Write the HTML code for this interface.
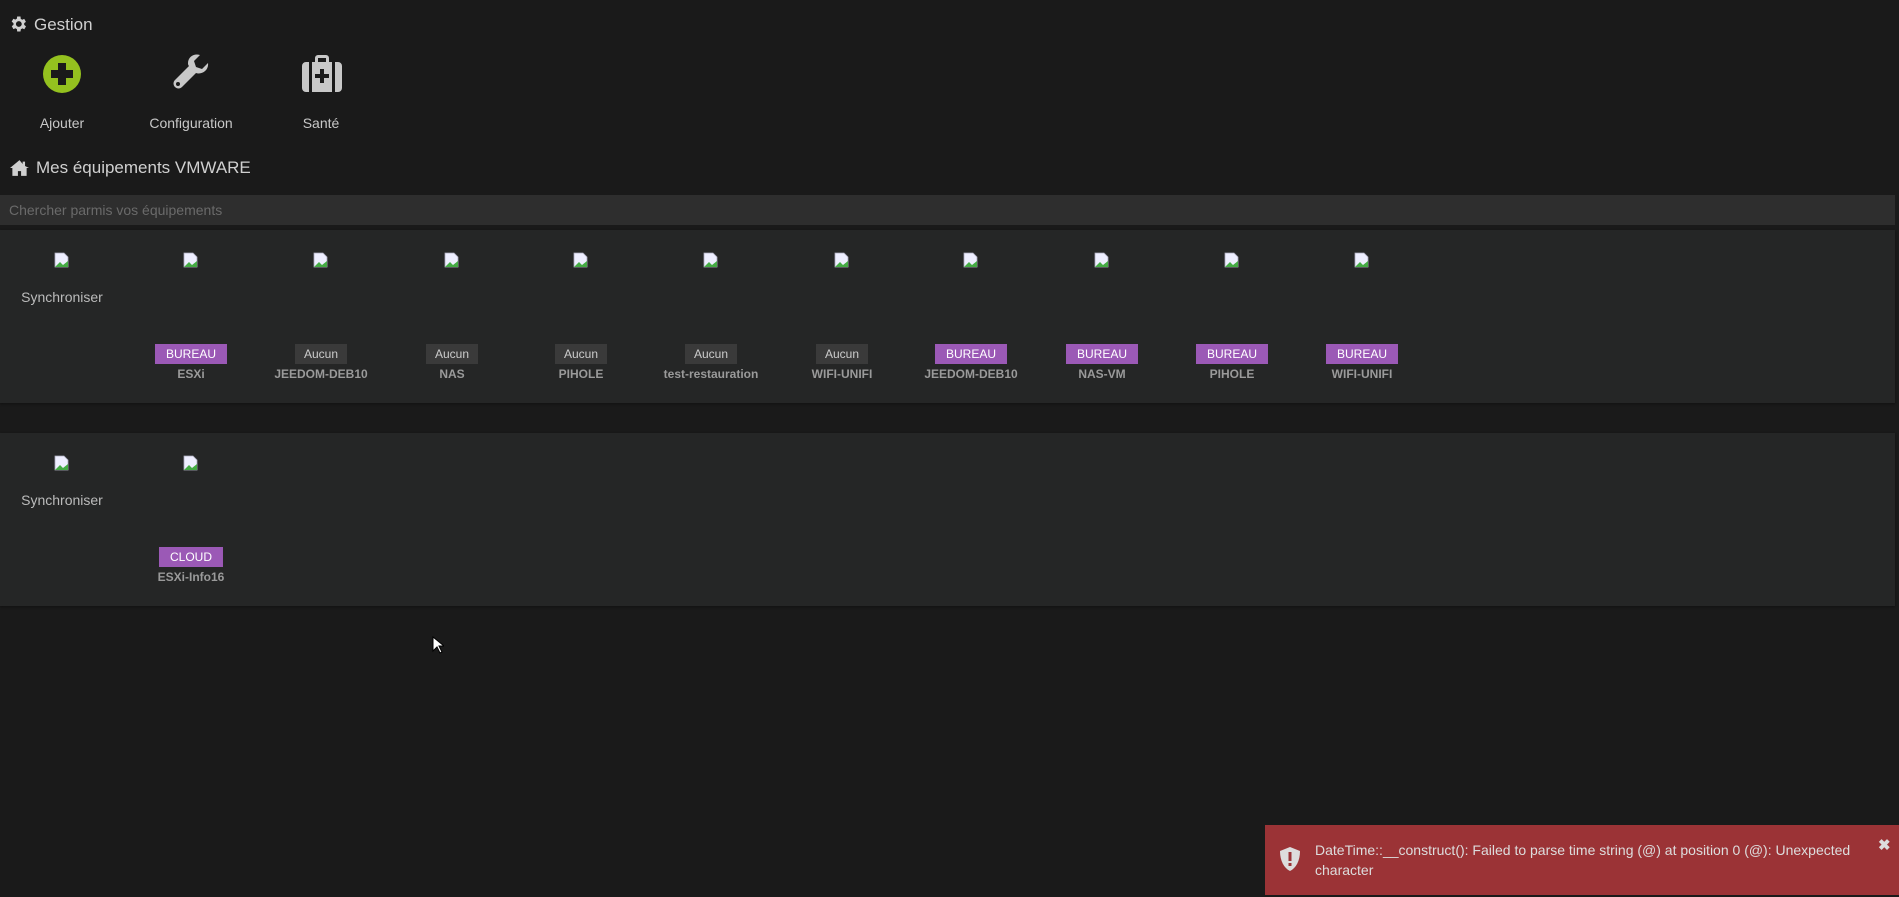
<!DOCTYPE html>
<html><head><meta charset="utf-8"><style>
*{margin:0;padding:0;box-sizing:border-box}
body{width:1899px;height:897px;background:#1a1a1a;font-family:"Liberation Sans",sans-serif;color:#ccc;position:relative;overflow:hidden}
.abs{position:absolute}
.h{font-size:17px;color:#d0d0d0}
.lbl{font-size:14px;color:#c8c8c8;text-align:center;width:130px}
.panel{position:absolute;left:0;width:1895px;height:173px;background:#252626;box-shadow:0 1px 2px #111}
.card{position:absolute;width:130px;text-align:center}
.img{position:absolute;left:57px;top:22px;width:16px;height:16px}
.badge{position:absolute;top:114px;height:20px;line-height:20px;font-size:12px;color:#fff;left:50%;transform:translateX(-50%);padding:0 11px}
.bu{background:#9b59b6}
.au{background:#3a3a3a;color:#ccc;padding:0 9px}
.nm{position:absolute;top:137px;width:130px;font-size:12px;font-weight:bold;color:#9a9a9a}
.sync{position:absolute;top:59px;width:130px;font-size:14px;color:#bbb}
</style></head><body>
<svg class="abs" style="left:8px;top:14px" width="20" height="20" viewBox="0 0 24 24"><path fill="#d0d0d0" d="M19.4 13a7.5 7.5 0 000-2l2.1-1.6-2-3.5-2.5 1a7 7 0 00-1.7-1L15 3h-4l-.4 2.7a7 7 0 00-1.7 1l-2.5-1-2 3.5L6.6 11a7.5 7.5 0 000 2l-2.1 1.6 2 3.5 2.5-1a7 7 0 001.7 1L11 21h4l.4-2.7a7 7 0 001.7-1l2.5 1 2-3.5zM13 15.5a3.5 3.5 0 110-7 3.5 3.5 0 010 7z"/></svg>
<div class="abs h" style="left:34px;top:15px">Gestion</div>

<svg class="abs" style="left:43px;top:55px" width="38" height="38" viewBox="0 0 38 38"><circle cx="19" cy="19" r="19" fill="#94c11f"/><path d="M15 8h8v7h7v8h-7v7h-8v-7H8v-8h7z" fill="#1a1a1a"/></svg>
<div class="abs lbl" style="left:-3px;top:115px">Ajouter</div>
<svg class="abs" style="left:172px;top:54px" width="40" height="40" viewBox="0 0 40 40"><path fill="#c8c8c8" d="M36 9l-6 6-6-2-2-6 6-6c-6-2-12 2-12 8 0 1 0 2 1 3L3 26c-2 2-2 5 0 7s5 2 7 0l14-14c6 2 13-3 12-10zM6 32a2 2 0 110-4 2 2 0 010 4z"/></svg>
<div class="abs lbl" style="left:126px;top:115px">Configuration</div>
<svg class="abs" style="left:302px;top:55px" width="40" height="37" viewBox="0 0 40 37"><path fill="#c8c8c8" d="M13 7V3a3 3 0 013-3h8a3 3 0 013 3v4h-3V3h-8v4zM0 11a4 4 0 014-4h3v30H4a4 4 0 01-4-4zM10 7h20v30H10zM33 7h3a4 4 0 014 4v22a4 4 0 01-4 4h-3z"/><path fill="#1a1a1a" d="M18 14h4v5h5v4h-5v5h-4v-5h-5v-4h5z"/></svg>
<div class="abs lbl" style="left:256px;top:115px">Santé</div>

<svg class="abs" style="left:10px;top:160px" width="19" height="16" viewBox="0 0 24 20"><path fill="#d0d0d0" d="M12 0L0 10h3v10h7v-6h4v6h7V10h3L19 7.5V2h-3v3z"/></svg>
<div class="abs h" style="left:36px;top:158px">Mes équipements VMWARE</div>

<div class="abs" style="left:0;top:195px;width:1895px;height:30px;background:#2e2e2e"></div>
<div class="abs" style="left:9px;top:202px;font-size:14px;color:#6a6a6a">Chercher parmis vos équipements</div>

<div class="panel" style="top:230px"></div>
<div class="panel" style="top:433px"></div>

<div class="abs" style="left:0;top:230px;width:1899px;height:173px">
<div class="card" style="left:-3px"><svg class="img" viewBox="0 0 16 16"><path d="M1 1h9l4 4v10H1z" fill="#eef" stroke="#aab" stroke-width=".8"/><path d="M1 15l5-5 3 3 5-4v6z" fill="#4a4"/></svg><div class="sync">Synchroniser</div></div>
<div class="card" style="left:126px"><svg class="img" viewBox="0 0 16 16"><path d="M1 1h9l4 4v10H1z" fill="#eef" stroke="#aab" stroke-width=".8"/><path d="M1 15l5-5 3 3 5-4v6z" fill="#4a4"/></svg><span class="badge bu">BUREAU</span><div class="nm">ESXi</div></div>
<div class="card" style="left:256px"><svg class="img" viewBox="0 0 16 16"><path d="M1 1h9l4 4v10H1z" fill="#eef" stroke="#aab" stroke-width=".8"/><path d="M1 15l5-5 3 3 5-4v6z" fill="#4a4"/></svg><span class="badge au">Aucun</span><div class="nm">JEEDOM-DEB10</div></div>
<div class="card" style="left:387px"><svg class="img" viewBox="0 0 16 16"><path d="M1 1h9l4 4v10H1z" fill="#eef" stroke="#aab" stroke-width=".8"/><path d="M1 15l5-5 3 3 5-4v6z" fill="#4a4"/></svg><span class="badge au">Aucun</span><div class="nm">NAS</div></div>
<div class="card" style="left:516px"><svg class="img" viewBox="0 0 16 16"><path d="M1 1h9l4 4v10H1z" fill="#eef" stroke="#aab" stroke-width=".8"/><path d="M1 15l5-5 3 3 5-4v6z" fill="#4a4"/></svg><span class="badge au">Aucun</span><div class="nm">PIHOLE</div></div>
<div class="card" style="left:646px"><svg class="img" viewBox="0 0 16 16"><path d="M1 1h9l4 4v10H1z" fill="#eef" stroke="#aab" stroke-width=".8"/><path d="M1 15l5-5 3 3 5-4v6z" fill="#4a4"/></svg><span class="badge au">Aucun</span><div class="nm">test-restauration</div></div>
<div class="card" style="left:777px"><svg class="img" viewBox="0 0 16 16"><path d="M1 1h9l4 4v10H1z" fill="#eef" stroke="#aab" stroke-width=".8"/><path d="M1 15l5-5 3 3 5-4v6z" fill="#4a4"/></svg><span class="badge au">Aucun</span><div class="nm">WIFI-UNIFI</div></div>
<div class="card" style="left:906px"><svg class="img" viewBox="0 0 16 16"><path d="M1 1h9l4 4v10H1z" fill="#eef" stroke="#aab" stroke-width=".8"/><path d="M1 15l5-5 3 3 5-4v6z" fill="#4a4"/></svg><span class="badge bu">BUREAU</span><div class="nm">JEEDOM-DEB10</div></div>
<div class="card" style="left:1037px"><svg class="img" viewBox="0 0 16 16"><path d="M1 1h9l4 4v10H1z" fill="#eef" stroke="#aab" stroke-width=".8"/><path d="M1 15l5-5 3 3 5-4v6z" fill="#4a4"/></svg><span class="badge bu">BUREAU</span><div class="nm">NAS-VM</div></div>
<div class="card" style="left:1167px"><svg class="img" viewBox="0 0 16 16"><path d="M1 1h9l4 4v10H1z" fill="#eef" stroke="#aab" stroke-width=".8"/><path d="M1 15l5-5 3 3 5-4v6z" fill="#4a4"/></svg><span class="badge bu">BUREAU</span><div class="nm">PIHOLE</div></div>
<div class="card" style="left:1297px"><svg class="img" viewBox="0 0 16 16"><path d="M1 1h9l4 4v10H1z" fill="#eef" stroke="#aab" stroke-width=".8"/><path d="M1 15l5-5 3 3 5-4v6z" fill="#4a4"/></svg><span class="badge bu">BUREAU</span><div class="nm">WIFI-UNIFI</div></div>
</div>

<div class="abs" style="left:0;top:433px;width:1899px;height:173px">
<div class="card" style="left:-3px"><svg class="img" viewBox="0 0 16 16"><path d="M1 1h9l4 4v10H1z" fill="#eef" stroke="#aab" stroke-width=".8"/><path d="M1 15l5-5 3 3 5-4v6z" fill="#4a4"/></svg><div class="sync">Synchroniser</div></div>
<div class="card" style="left:126px"><svg class="img" viewBox="0 0 16 16"><path d="M1 1h9l4 4v10H1z" fill="#eef" stroke="#aab" stroke-width=".8"/><path d="M1 15l5-5 3 3 5-4v6z" fill="#4a4"/></svg><span class="badge bu">CLOUD</span><div class="nm">ESXi-Info16</div></div>
</div>

<svg class="abs" style="left:432px;top:636px" width="12" height="18" viewBox="0 0 12 18"><path d="M1 1v14l4-4 3 6 2-1-3-6h5z" fill="#fff" stroke="#000" stroke-width="1"/></svg>

<div class="abs" style="left:1265px;top:825px;width:634px;height:70px;background:#9b3336"></div>
<svg class="abs" style="left:1280px;top:847px" width="20" height="24" viewBox="0 0 20 24"><path d="M10 0l10 4c0 10-4 17-10 20C4 21 0 14 0 4z" fill="#ddd"/><rect x="8.5" y="5" width="3" height="9" fill="#9b3336"/><rect x="8.5" y="16" width="3" height="3" fill="#9b3336"/></svg>
<div class="abs" style="left:1315px;top:840px;width:560px;font-size:14px;line-height:20px;color:#ddd">DateTime::__construct(): Failed to parse time string (@) at position 0 (@): Unexpected character</div>
<div class="abs" style="left:1878px;top:836px;font-size:15px;color:#ddd;font-weight:bold">✖</div>
</body></html>
